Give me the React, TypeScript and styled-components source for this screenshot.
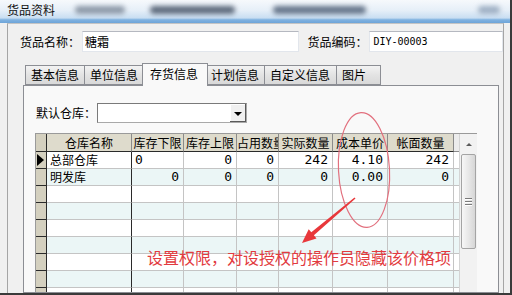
import styled, { createGlobalStyle } from "styled-components"

const GlobalStyle = createGlobalStyle`
  html, body { margin: 0; padding: 0; background: #f0f0f0; }
  body {
    font-family: "Noto Sans CJK SC", "Noto Sans", sans-serif;
    font-size: 12px;
    color: #000;
  }
  * { box-sizing: border-box; }
`

const Window = styled.div`
  position: relative;
  width: 512px;
  height: 295px;
  overflow: hidden;
  display: flex;
  flex-direction: column;
  background: #f0f0f0;
  border-right: 2px solid #3a3a3a;
  border-bottom: 2px solid #3a3a3a;
`

const TitleBar = styled.div`
  flex: none;
  height: 23px;
  display: flex;
  align-items: center;
  padding: 0 0 4px 7px;
  background: linear-gradient(
    to bottom,
    #f6f9fc 0%,
    #e6eff8 45%,
    #c9def2 78%,
    #80b2e0 86%,
    #6ea4d8 100%
  );
`

const Title = styled.span`
  font-size: 12px;
  line-height: 14px;
  color: #111;
  white-space: nowrap;
`

const Blur = styled.span<{ $w: number; $gap: number; $tone: string }>`
  flex: none;
  width: ${(p) => p.$w}px;
  height: 8px;
  margin-left: ${(p) => p.$gap}px;
  background: ${(p) => p.$tone};
  border-radius: 4px;
  filter: blur(2.5px);
`

const Body = styled.div`
  flex: 1;
  min-height: 0;
  margin: 0 6px 0 7px;
  border-left: 1px solid #a5a5a5;
  border-right: 1px solid #a5a5a5;
  border-top: 1px solid #c4c4c4;
  padding: 7px 0 0 12px;
  display: flex;
  flex-direction: column;
`

const FormRow = styled.div`
  display: flex;
  align-items: center;
  height: 21px;
`

const Label = styled.span<{ $gap?: number }>`
  flex: none;
  width: 60px;
  margin-left: ${(p) => p.$gap ?? 0}px;
  white-space: nowrap;
  line-height: 14px;
`

const Field = styled.div<{ $w: number; $mono?: boolean }>`
  width: ${(p) => p.$w}px;
  height: 21px;
  margin-left: 2px;
  padding-left: ${(p) => (p.$mono ? 3 : 2)}px;
  display: flex;
  align-items: center;
  background: #fff;
  border: 1px solid #e2e6ec;
  border-top-color: #b5b8c0;
  font-family: ${(p) =>
    p.$mono ? '"DejaVu Sans Mono", monospace' : "inherit"};
  font-size: ${(p) => (p.$mono ? 10 : 12)}px;
`

const TabArea = styled.div`
  flex: 1;
  min-height: 0;
  width: 476px;
  margin: 11px 0 0 3px;
  display: flex;
  flex-direction: column;
`

const TabStrip = styled.div`
  display: flex;
  align-items: flex-end;
  height: 22px;
  padding-left: 2px;
  position: relative;
  z-index: 1;
`

const Tab = styled.div<{ $w: number; $active?: boolean }>`
  flex: none;
  width: ${(p) => p.$w}px;
  height: ${(p) => (p.$active ? 23 : 20)}px;
  margin: ${(p) => (p.$active ? "0 -2px -1px -2px" : "0 0 0 -1px")};
  padding: ${(p) => (p.$active ? "3px 0 0 7px" : "2px 0 0 5px")};
  border: 1px solid #8c8e94;
  border-bottom: ${(p) => (p.$active ? "none" : "1px solid #8c8e94")};
  background: ${(p) =>
    p.$active ? "#f9f9f9" : "linear-gradient(to bottom, #f3f3f3, #e3e3e3 50%, #d9d9d9)"};
  position: relative;
  z-index: ${(p) => (p.$active ? 2 : 0)};
  white-space: nowrap;
  line-height: 14px;
  &:first-child { margin-left: ${(p) => (p.$active ? "-2px" : "0")}; }
`

const TabPanel = styled.div`
  flex: 1;
  min-height: 0;
  border: 1px solid #8c8e94;
  background: #f9f9f9;
  padding: 17px 0 0 12px;
  display: flex;
  flex-direction: column;
`

const ComboRow = styled.div`
  display: flex;
  align-items: center;
  height: 20px;
`

const Combo = styled.div`
  width: 150px;
  height: 20px;
  margin-left: 1px;
  background: #fff;
  border: 1px solid #a9a9a9;
  border-top-color: #7a7a7a;
  border-left-color: #7a7a7a;
  display: flex;
  justify-content: flex-end;
`

const DropButton = styled.div`
  width: 16px;
  height: 100%;
  background: #f0f0f0;
  box-shadow: inset -1px -1px #5a5a5a, inset 1px 1px #ffffff;
  display: flex;
  align-items: center;
  justify-content: center;
  &::after {
    content: "";
    border-top: 4px solid #000;
    border-left: 4px solid transparent;
    border-right: 4px solid transparent;
    margin-top: 1px;
  }
`

const GridWrap = styled.div`
  flex: 1;
  min-height: 0;
  width: 442px;
  margin: 10px 0 0 -1px;
  display: flex;
  overflow: hidden;
  border-top: 1px solid #9a9a9a;
  border-left: 1px solid #9a9a9a;
`

const Grid = styled.div`
  width: 423px;
  flex: none;
`

const COLS = "11px 85px 52px 53px 42px 54px 55px 66px 5px"

const Row = styled.div<{ $alt?: boolean; $head?: boolean }>`
  display: grid;
  grid-template-columns: ${COLS};
  height: ${(p) => (p.$head ? 18 : 17)}px;
  background: ${(p) => (p.$head ? "#dedbcc" : p.$alt ? "#ebf6f6" : "#ffffff")};
`

const HeadCell = styled.div`
  border-right: 1px solid #8a8a8a;
  border-bottom: 1px solid #2a2a2a;
  text-align: center;
  white-space: nowrap;
  overflow: hidden;
  line-height: 17px;
`

const Corner = styled.div`
  background: #d4d0bf;
  border-right: 1px solid #2a2a2a;
  border-bottom: 1px solid #2a2a2a;
`

const HeadFiller = styled.div`
  background: #ececec;
  border-bottom: 1px solid #8a8a8a;
`

const RowHead = styled.div<{ $current?: boolean }>`
  background: #d4d0bf;
  border-right: 1px solid #2a2a2a;
  border-bottom: 1px solid #2a2a2a;
  display: flex;
  align-items: center;
  padding-left: 1px;
  &::after {
    content: "";
    display: ${(p) => (p.$current ? "block" : "none")};
    border-left: 7px solid #000;
    border-top: 6px solid transparent;
    border-bottom: 6px solid transparent;
  }
`

const NameCell = styled.div`
  border-right: 1px solid #2a2a2a;
  border-bottom: 1px solid #c4c4c4;
  padding-left: 3px;
  line-height: 16px;
  white-space: nowrap;
  overflow: hidden;
`

const NumCell = styled.div<{ $left?: boolean }>`
  border-right: 1px solid #c4c4c4;
  border-bottom: 1px solid #c4c4c4;
  padding: 0 4px 0 3px;
  text-align: ${(p) => (p.$left ? "left" : "right")};
  font-family: "DejaVu Sans Mono", monospace;
  font-size: 13px;
  line-height: 16px;
  white-space: nowrap;
  overflow: hidden;
`

const Filler = styled.div`
  border-bottom: 1px solid #c4c4c4;
`

const ScrollBar = styled.div`
  width: 18px;
  flex: none;
  background: #f2f2f2;
  border-left: 1px solid #d4d4d4;
  display: flex;
  flex-direction: column;
  align-items: center;
`

const ArrowUp = styled.div`
  height: 20px;
  width: 100%;
  display: flex;
  align-items: center;
  justify-content: center;
  &::after {
    content: "";
    border-bottom: 3px solid #5a5a5a;
    border-left: 3px solid transparent;
    border-right: 3px solid transparent;
  }
`

const Thumb = styled.div`
  width: 15px;
  height: 95px;
  border: 1px solid #a4a4a4;
  border-radius: 2px;
  background: linear-gradient(to right, #f7f7f7, #e6e6e6 55%, #d6d6d6);
  display: flex;
  flex-direction: column;
  align-items: center;
  justify-content: center;
  gap: 2px;
`

const Grip = styled.span`
  width: 7px;
  height: 1px;
  background: #7a7a7a;
  box-shadow: 0 1px #fff;
`

const Overlay = styled.div`
  position: absolute;
  inset: 0;
  pointer-events: none;
`

const Note = styled.div`
  position: absolute;
  left: 147px;
  top: 248px;
  font-size: 16px;
  line-height: 18px;
  color: #e23b40;
  white-space: nowrap;
`

type Line = { name: string; vals: string[]; current?: boolean }

const lines: Line[] = [
  { name: "总部仓库", vals: ["0", "0", "0", "242", "4.10", "242"], current: true },
  { name: "明发库", vals: ["0", "0", "0", "0", "0.00", "0"] },
  ...Array.from({ length: 7 }, () => ({ name: "", vals: ["", "", "", "", "", ""] })),
]

const heads = ["仓库名称", "库存下限", "库存上限", "占用数量", "实际数量", "成本单价", "帐面数量"]

export default function App() {
  return (
    <>
      <GlobalStyle />
      <Window>
        <TitleBar>
          <Title>货品资料</Title>
          <Blur $w={50} $gap={20} $tone="#8d99a8" />
          <Blur $w={85} $gap={25} $tone="#5d6a7c" />
          <Blur $w={93} $gap={38} $tone="#65758a" />
          <Blur $w={22} $gap={112} $tone="#9fb0c4" />
        </TitleBar>
        <Body>
          <FormRow>
            <Label>货品名称：</Label>
            <Field $w={218}>糖霜</Field>
            <Label $gap={8}>货品编码：</Label>
            <Field $w={134} $mono>DIY-00003</Field>
          </FormRow>
          <TabArea>
            <TabStrip>
              <Tab $w={60}>基本信息</Tab>
              <Tab $w={60}>单位信息</Tab>
              <Tab $w={66} $active>存货信息</Tab>
              <Tab $w={60}>计划信息</Tab>
              <Tab $w={73}>自定义信息</Tab>
              <Tab $w={45}>图片</Tab>
            </TabStrip>
            <TabPanel>
              <ComboRow>
                <Label>默认仓库：</Label>
                <Combo>
                  <DropButton />
                </Combo>
              </ComboRow>
              <GridWrap>
                <Grid>
                  <Row $head>
                    <Corner />
                    {heads.map((h) => (
                      <HeadCell key={h}>{h}</HeadCell>
                    ))}
                    <HeadFiller />
                  </Row>
                  {lines.map((l, i) => (
                    <Row key={i} $alt={i % 2 === 1}>
                      <RowHead $current={l.current} />
                      <NameCell>{l.name}</NameCell>
                      {l.vals.map((v, j) => (
                        <NumCell key={j} $left={l.current && j === 0}>
                          {v}
                        </NumCell>
                      ))}
                      <Filler />
                    </Row>
                  ))}
                </Grid>
                <ScrollBar>
                  <ArrowUp />
                  <Thumb>
                    <Grip />
                    <Grip />
                    <Grip />
                  </Thumb>
                </ScrollBar>
              </GridWrap>
            </TabPanel>
          </TabArea>
        </Body>
        <Overlay>
          <svg width="512" height="295" viewBox="0 0 512 295">
            <ellipse
              cx="364"
              cy="170"
              rx="25.5"
              ry="57.5"
              transform="rotate(-3 364 170)"
              fill="none"
              stroke="#e2707e"
              strokeWidth="1.2"
            />
            <polygon
              points="355.5,198.5 313.9,235.3 316.5,238.4 302,243 308.7,229.2 311.3,232.3 354.5,197.5"
              fill="#e8383b"
            />
          </svg>
          <Note>设置权限，对设授权的操作员隐藏该价格项</Note>
        </Overlay>
      </Window>
    </>
  )
}
